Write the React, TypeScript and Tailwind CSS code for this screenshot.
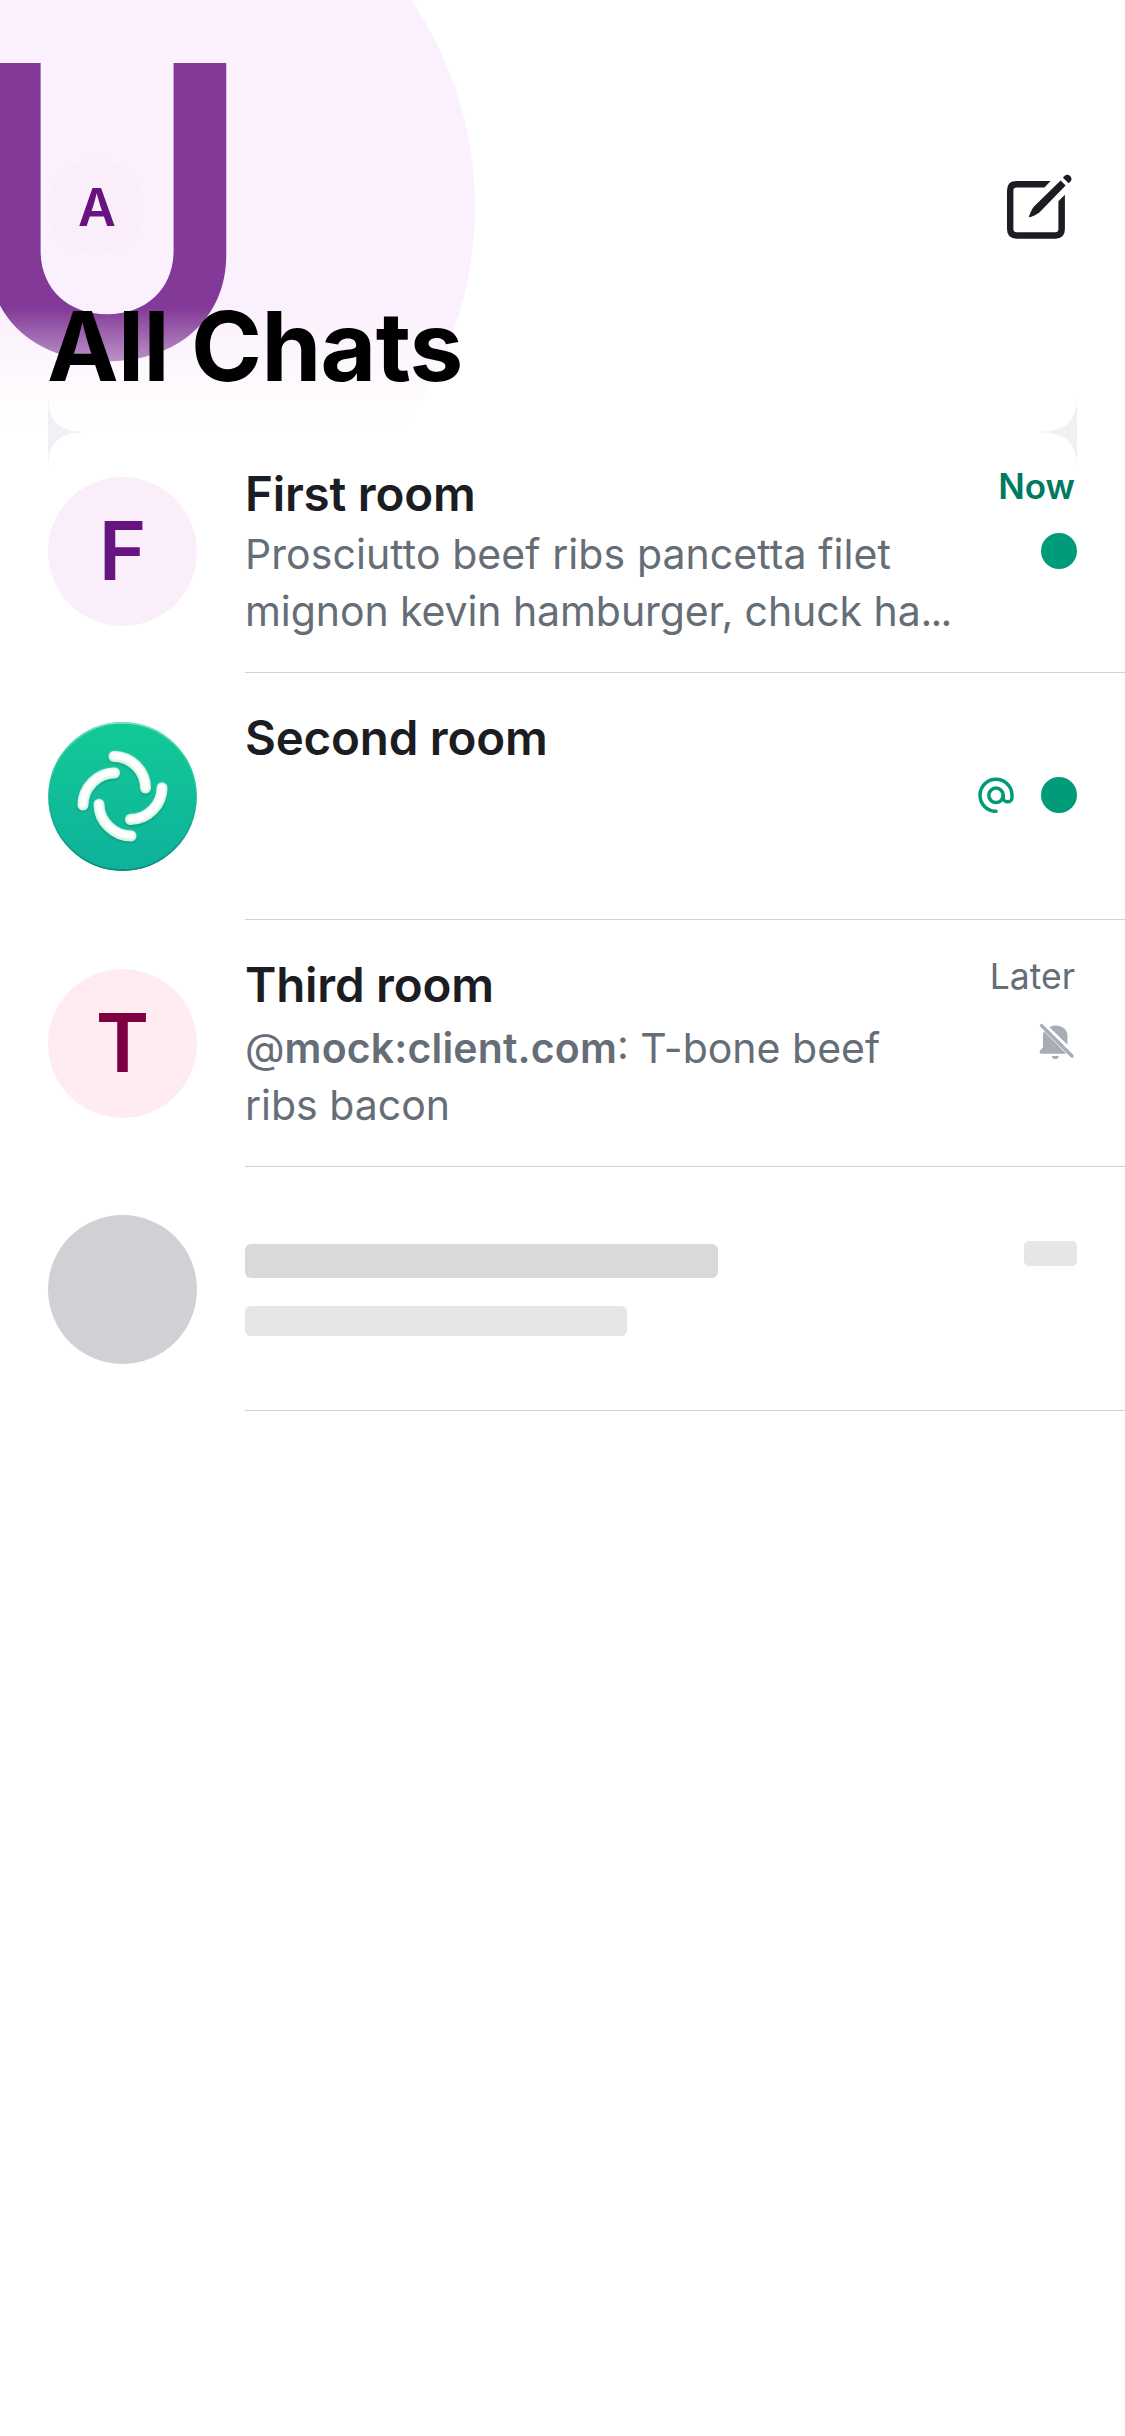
import type { ReactNode } from 'react';

function ComposeIcon() {
  return (
    <svg className="h-[120px] w-[120px]" viewBox="0 0 120 120" fill="none">
      <path d="M70.600 31.100H36.500Q27 31.100 27 40.500V79Q27 88.700 36.500 88.700H75.500Q84.900 88.700 84.900 79V44.800L78.400 51.300V79Q78.400 82.300 75.500 82.300H36.500Q33.400 82.300 33.400 79V40.500Q33.400 37.600 36.500 37.600H64.500Z" fill="#1b1d22" />
      <path d="M80.600 30.600 54 56.500Q51.500 59.500 49 66.300Q48.900 67.400 50 67.200Q56.500 65 59.600 62.200L85.600 35.600Z" fill="#1b1d22" />
      <path d="M84.200 26.200Q87.500 23.500 90.300 26.200Q92.800 29 90.200 31.800L88.600 33.200 83 27.700Z" fill="#1b1d22" />
    </svg>
  );
}

const swirl = [
  'M66 34.5C83 34.5 97.5 49 97.5 66',
  'M114 66C114 83 99.500 97.500 82.500 97.500',
  'M83 114C66 114 51 99.500 51 82.500',
  'M35 83C35 66 49.500 51 66.500 51',
];

function ElementLogo() {
  const arcs = swirl.map((d) => <path key={d} d={d} />);
  return (
    <svg className="h-[149px] w-[149px]" viewBox="0 0 149 149" fill="none">
      <defs>
        <linearGradient id="disc" x1="0" y1="0" x2="0" y2="1">
          <stop offset="0" stopColor="#12ca96" />
          <stop offset="1" stopColor="#0fb19b" />
        </linearGradient>
        <linearGradient id="rim" x1="0" y1="0" x2="0" y2="1">
          <stop offset="0" stopColor="#7be3c4" />
          <stop offset="0.4" stopColor="#2cc69c" stopOpacity="0.4" />
          <stop offset="0.6" stopColor="#0c9c86" stopOpacity="0.3" />
          <stop offset="1" stopColor="#078873" />
        </linearGradient>
        <filter id="soft" x="-20%" y="-20%" width="140%" height="140%">
          <feGaussianBlur stdDeviation="1" />
        </filter>
      </defs>
      <circle cx="74.5" cy="74.5" r="74.3" fill="url(#disc)" />
      <circle cx="74.5" cy="74.5" r="73.6" stroke="url(#rim)" strokeWidth="1.6" />
      <g strokeLinecap="round">
        <g stroke="#078f73" strokeOpacity="0.6" strokeWidth="11" filter="url(#soft)" transform="translate(0 1.5)">{arcs}</g>
        <g stroke="#c9f0da" strokeWidth="11">{arcs}</g>
        <g stroke="#ffffff" strokeWidth="8" filter="url(#soft)" transform="translate(0 -0.8)">{arcs}</g>
      </g>
    </svg>
  );
}

function MentionIcon() {
  return (
    <svg className="h-9 w-9" viewBox="0 0 36 36" fill="none" stroke="#009b78" strokeWidth="3.5" strokeLinecap="round">
      <circle cx="18" cy="18.300" r="7.200" />
      <path d="M25.200 18.500V20.500C25.200 26.300 34 26.300 34 20.500V18A16 16 0 1 0 18 34.300" />
    </svg>
  );
}

function MutedIcon() {
  return (
    <svg className="h-9 w-9" viewBox="0 0 36 36" fill="#a6adb7">
      <path d="M5.200 8.300 27.300 30.800H2.700C.3 30.800 .3 28 1.300 27.200L4 24.500V13C4 11 4.400 9.800 5.200 8.300Z" />
      <path d="M10.500 4.200C17 .3 28.500 3.500 28.500 13V21.800Z" />
      <path d="M2.600 2.600 33 33" stroke="#a6adb7" strokeWidth="3.400" strokeLinecap="round" />
      <path d="M12.800 33H19.800C19.800 37.200 12.800 37.200 12.800 33Z" />
    </svg>
  );
}

const UnreadDot = () => <span className="h-9 w-9 rounded-full bg-[#009b78]" />;

function CornerNotch({ className }: { className: string }) {
  return (
    <svg className={className} viewBox="0 0 36 72" fill="#f0f1f5">
      <path d="M0 0C.5 25 10 35.500 36 35.500V36.500C10 36.500 .5 47 0 72Z" />
    </svg>
  );
}

function Row({ avatar, avatarClass, title, titleClass, children, time, badges, last }: {
  avatar: ReactNode; avatarClass: string; title: ReactNode; titleClass: string; children?: ReactNode;
  time?: ReactNode; badges?: ReactNode; last?: boolean;
}) {
  return (
    <div className={`flex pl-12 ${last ? 'h-[244px]' : 'h-[247px]'}`}>
      <div className={`w-[197px] shrink-0 ${avatarClass}`}>{avatar}</div>
      <div className="flex min-w-0 flex-1 justify-between border-b border-[#cdd3da] pr-12">
        <div className={`min-w-0 whitespace-nowrap ${titleClass}`}>
          {title}
          {children}
        </div>
        <div className="flex flex-col items-end">
          {time}
          {badges}
        </div>
      </div>
    </div>
  );
}

const Name = ({ children }: { children: ReactNode }) => (
  <div className="text-[47.500px] leading-[60px] font-semibold tracking-[-0.200px] text-[#1b1d22]">{children}</div>
);

const Letter = ({ className, children }: { className: string; children: ReactNode }) => (
  <div className={`flex h-[149px] w-[149px] items-center justify-center rounded-full text-[81px] font-semibold ${className}`}>{children}</div>
);

export default function App() {
  return (
    <div className="h-[2436px] w-[1125px] overflow-hidden bg-white font-['Inter',sans-serif]">
      <header className="relative h-[426px]">
        <div className="absolute inset-0 overflow-hidden">
          <div className="absolute top-[-161px] left-[-261px] flex h-[736px] w-[736px] items-center justify-center rounded-full bg-[#fbf0fd]">
            <span className="pt-[6px] text-[404px] leading-none font-semibold text-[#833998]">U</span>
          </div>
          <div className="absolute inset-x-0 top-[308px] bottom-0 bg-linear-to-b from-white/0 to-white" />
        </div>
        <CornerNotch className="absolute top-[396px] left-12 h-[72px] w-9" />
        <CornerNotch className="absolute top-[396px] right-12 h-[72px] w-9 -scale-x-100" />
        <div className="relative flex items-start justify-between pt-[150px] pr-[25px] pl-12">
          <div className="mt-[9px] flex h-24 w-24 items-center justify-center rounded-full bg-[#f9eefa] pt-px pl-[2px] text-[52px] font-semibold text-[#671481]">A</div>
          <ComposeIcon />
        </div>
        <h1 className="relative mt-[16px] pl-[47px] text-[96px] leading-[120px] font-bold tracking-[-0.600px] text-black">All Chats</h1>
      </header>

      <main>
        <Row
          avatar={<Letter className="bg-[#f9eefa] text-[#671481]">F</Letter>}
          avatarClass="pt-[51px]"
          titleClass="pt-[38px]"
          title={<Name>First room</Name>}
          time={<div className="mt-[38px] mr-[2px] text-[35px] leading-[44px] font-semibold text-[#007a61]">Now</div>}
          badges={<div className="mt-[25px] flex"><UnreadDot /></div>}
        >
          <p className="mt-[2px] text-[41px] leading-[57px] text-[#656d77]">
            <span className="tracking-[0.080px]">Prosciutto beef ribs pancetta filet</span>
            <br />
            <span className="tracking-[-0.080px]">mignon kevin hamburger, chuck ha<span className="tracking-[-1.800px]">...</span></span>
          </p>
        </Row>
        <Row
          avatar={<ElementLogo />}
          avatarClass="pt-[49px]"
          titleClass="pt-[35px]"
          title={<Name>Second room</Name>}
          badges={<div className="mt-[104px] flex gap-[27px]"><MentionIcon /><UnreadDot /></div>}
        />
        <Row
          avatar={<Letter className="bg-[#ffecf0] text-[#7d0042]">T</Letter>}
          avatarClass="pt-[49px]"
          titleClass="pt-[35px]"
          title={<Name>Third room</Name>}
          time={<div className="mt-[35px] mr-[2px] text-[35.500px] leading-[44px] text-[#656d77]">Later</div>}
          badges={<div className="mt-[24px] mr-[2px] flex"><MutedIcon /></div>}
        >
          <p className="mt-[5px] text-[41px] leading-[57px] text-[#656d77]">
            <span>@</span><b className="font-semibold tracking-[0.150px]">mock:client.com</b>: T-bone beef
            <br />
            ribs bacon
          </p>
        </Row>
        <Row
          last
          avatar={<div className="h-[149px] w-[149px] rounded-full bg-[#d1d0d5]" />}
          avatarClass="pt-12"
          titleClass="pt-[77px]"
          title={<div className="h-[34px] w-[473px] rounded-[6px] bg-[#d9d9d9]" />}
          time={<div className="mt-[74px] h-[25px] w-[53px] rounded-[5px] bg-[#e5e6e8]" />}
        >
          <div className="mt-[28px] h-[30px] w-[382px] rounded-[6px] bg-[#e5e6e8]" />
        </Row>
      </main>
    </div>
  );
}
